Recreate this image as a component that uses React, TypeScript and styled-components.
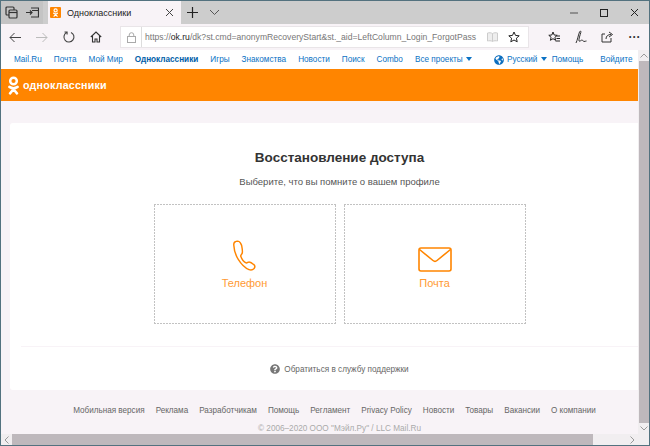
import React from 'react'
import styled, { createGlobalStyle } from 'styled-components'
import { FaGlobeAmericas, FaQuestionCircle } from 'react-icons/fa'

const GlobalStyle = createGlobalStyle`
  html, body {
    margin: 0;
    padding: 0;
    width: 650px;
    height: 446px;
    overflow: hidden;
    background: #f8f3f7;
    font-family: 'Liberation Sans', Arial, sans-serif;
  }
  * { box-sizing: border-box; }
`

const topLinks = ['Mail.Ru', 'Почта', 'Мой Мир', 'Одноклассники', 'Игры', 'Знакомства', 'Новости', 'Поиск', 'Combo']
const footerLinks = ['Мобильная версия', 'Реклама', 'Разработчикам', 'Помощь', 'Регламент', 'Privacy Policy', 'Новости', 'Товары', 'Вакансии', 'О компании']

function OkLogo({ size, color }: { size: number; color: string }) {
  return (
    <svg width={size * 0.58} height={size} viewBox='0 0 16 27' fill='none' stroke={color} strokeLinecap='round'>
      <circle cx='8' cy='7' r='4.8' strokeWidth='3.6' />
      <path d='M2 15.500c3.600 2.400 8.400 2.400 12 0M8 18v1M8 19 3 25M8 19 13 25' strokeWidth='3.6' />
    </svg>
  )
}

export default function App() {
  return (
    <>
      <GlobalStyle />
      <Win>
        <TabBar>
          <TabStripIcon>
            <svg width='13' height='13' viewBox='0 0 13 13' fill='none' stroke='#333' strokeWidth='1.2'>
              <rect x='1' y='1' width='8' height='8' rx='1' />
              <rect x='4' y='4' width='8' height='8' rx='1' fill='#c4c4c4' />
              <path d='M4 6.500h8' />
            </svg>
          </TabStripIcon>
          <TabStripIcon>
            <svg width='13' height='11' viewBox='0 0 13 11' fill='none' stroke='#333' strokeWidth='1.2'>
              <path d='M5 1h7.500v9H5M6 3.500h6.500' />
              <path d='M0 5.500h6M4 3.500l2 2-2 2' />
            </svg>
          </TabStripIcon>
          <Tab>
            <TabFavicon><OkLogo size={9} color='#fff' /></TabFavicon>
            <TabTitle>Одноклассники</TabTitle>
            <svg width='9' height='9' viewBox='0 0 9 9' stroke='#444' strokeWidth='1'>
              <path d='M1 1l7 7M8 1 1 8' />
            </svg>
          </Tab>
          <NewTab>
            <svg width='11' height='11' viewBox='0 0 11 11' stroke='#222' strokeWidth='1.200'>
              <path d='M5.500 0v11M0 5.500h11' />
            </svg>
          </NewTab>
          <NewTab>
            <svg width='11' height='7' viewBox='0 0 11 7' fill='none' stroke='#555' strokeWidth='1'>
              <path d='M1 1l4.500 4.500L10 1' />
            </svg>
          </NewTab>
          <WindowButtons>
            <WindowButton>
              <svg width='8' height='2' viewBox='0 0 8 2'><path d='M0 1h8' stroke='#666' strokeWidth='1.200' /></svg>
            </WindowButton>
            <WindowButton>
              <svg width='8' height='8' viewBox='0 0 8 8' fill='none'><rect x='.5' y='.5' width='7' height='7' stroke='#222' /></svg>
            </WindowButton>
            <WindowButton>
              <svg width='9' height='9' viewBox='0 0 9 9' stroke='#222'><path d='M1 1l7 7M8 1 1 8' /></svg>
            </WindowButton>
          </WindowButtons>
        </TabBar>

        <Toolbar>
          <NavIcon>
            <svg width='12' height='11' viewBox='0 0 12 11' fill='none' stroke='#444' strokeWidth='1'>
              <path d='M12 5.500H1M5.500 1 1 5.500 5.500 10' />
            </svg>
          </NavIcon>
          <NavIcon>
            <svg width='12' height='11' viewBox='0 0 12 11' fill='none' stroke='#bbb' strokeWidth='1'>
              <path d='M0 5.500h11M6.500 1 11 5.500 6.500 10' />
            </svg>
          </NavIcon>
          <NavIcon>
            <svg width='12' height='12' viewBox='0 0 12 12' fill='none' stroke='#444' strokeWidth='1.100'>
              <path d='M3.500 1.600A5 5 0 1 0 8 1.400M1.500 1h2.600v2.600' />
            </svg>
          </NavIcon>
          <NavIcon>
            <svg width='12' height='12' viewBox='0 0 12 12' fill='none' stroke='#333' strokeWidth='1.100'>
              <path d='M.8 6 6 1l5.200 5M2.500 5v6h2.500V8h2v3h2.500V5' />
            </svg>
          </NavIcon>
          <AddressBar>
            <LockBox>
              <svg width='9' height='11' viewBox='0 0 9 11' fill='none' stroke='#aaa' strokeWidth='1'>
                <rect x='.5' y='4.500' width='8' height='6' />
                <path d='M2.200 4.500V3a2.300 2.300 0 0 1 4.600 0v1.500' />
              </svg>
            </LockBox>
            <Url>
              https://<b>ok.ru</b>/dk?st.cmd=anonymRecoveryStart&amp;st._aid=LeftColumn_Login_ForgotPass
            </Url>
            <svg width='11' height='10' viewBox='0 0 11 10' fill='#eee' stroke='#ccc'>
              <path d='M5.500 1.500C4 .6 2 .6.5 1v8c1.500-.4 3.500-.4 5 .4 1.500-.8 3.500-.8 5-.4V1C9 .6 7 .6 5.500 1.500zM5.500 1.500v8' />
            </svg>
            <AddressStar>
              <svg width='12' height='12' viewBox='0 0 12 12' fill='none' stroke='#222' strokeWidth='1'>
                <path d='M6 1l1.500 3.400 3.700.4-2.800 2.400.8 3.600L6 9l-3.200 1.800.8-3.600L.8 4.800l3.700-.4z' />
              </svg>
            </AddressStar>
          </AddressBar>
          <ToolIcons>
            <ToolIcon>
              <svg width='12' height='12' viewBox='0 0 12 12' fill='none' stroke='#222' strokeWidth='1'>
                <path d='M5 1l1.200 3 3 .3-2.300 2 .7 3L5 7.700 2.400 9.300l.7-3-2.300-2 3-.3zM8.500 5H12M8.500 7.500H12M7.500 10H12' />
              </svg>
            </ToolIcon>
            <ToolIcon>
              <svg width='12' height='14' viewBox='0 0 12 14' fill='none' stroke='#333' strokeWidth='1'>
                <path d='M1 13c1.500-3 2-7 3.500-11 .6-1.500 1.800-1 1.300.5C5.200 5 3.500 9 4 11c1 .8 2-1 3-1s1 1.500 2 1.500 1.500-.5 2.500-.5' />
              </svg>
            </ToolIcon>
            <ToolIcon>
              <svg width='13' height='12' viewBox='0 0 13 12' fill='none' stroke='#333' strokeWidth='1'>
                <path d='M10 7v4H1V3h3M5 8c0-3 2-4.500 5-4.500M8 1l3.500 2.500L8 6' />
              </svg>
            </ToolIcon>
            <ToolIcon><Dots>···</Dots></ToolIcon>
          </ToolIcons>
        </Toolbar>

        <Viewport>
          <Page>
            <TopNav>
              {topLinks.map((l) => (
                <TopLink key={l} $strong={l === 'Одноклассники'}>{l}</TopLink>
              ))}
              <TopLink>Все проекты <Caret /></TopLink>
              <LangGroup>
                <FaGlobeAmericas size={10} color='#0d6fbf' />
                <TopLink>Русский <Caret /></TopLink>
              </LangGroup>
              <HelpLink>Помощь</HelpLink>
              <LoginLink>Войдите</LoginLink>
            </TopNav>
            <Brand>
              <OkLogo size={19} color='#fff' />
              <BrandName>одноклассники</BrandName>
            </Brand>
            <Content>
              <Card>
                <Title>Восстановление доступа</Title>
                <Subtitle>Выберите, что вы помните о вашем профиле</Subtitle>
                <Options>
                  <Option>
                    <svg width='23' height='32' viewBox='0 0 24 32' fill='none' stroke='#ff8500' strokeWidth='1.500'>
                      <path d='M3 .8C1.500 1.200.7 2.500.8 4.500c.3 5 1.800 10.500 4.700 15 2.800 4.500 6.500 8.800 11.200 10.700 2 .8 4 .3 5.300-1.200 1.200-1.500 1-3-.5-4.200-1.500-1.300-3-2.400-4.500-2.600-1.200-.2-2.200 1.500-3.400 1-2.200-1-4.500-4.200-5.500-7-.4-1.200 1.300-2 1.600-3.300.4-2-.1-5-.7-8C8 2.500 7.200.9 6 .7 5 .5 4 .5 3 .8z' />
                    </svg>
                    <OptionLabel>Телефон</OptionLabel>
                  </Option>
                  <Option>
                    <svg width='34' height='25' viewBox='0 0 34 25' fill='none' stroke='#ff8500' strokeWidth='1.600'>
                      <rect x='1' y='1' width='32' height='23' rx='2' />
                      <path d='M1.500 2.500 15 13.500c1.200 1 2.800 1 4 0L32.500 2.500' />
                    </svg>
                    <OptionLabel>Почта</OptionLabel>
                  </Option>
                </Options>
                <Divider />
                <Support>
                  <FaQuestionCircle size={10} color='#777' />
                  <span>Обратиться в службу поддержки</span>
                </Support>
              </Card>
              <FooterLinks>
                {footerLinks.map((l, i) => <span key={i}>{l}</span>)}
              </FooterLinks>
              <Copyright>© 2006–2020 ООО "Мэйл.Ру" / LLC Mail.Ru</Copyright>
            </Content>
          </Page>
          <VScroll>
            <svg width='8' height='5' viewBox='0 0 8 5' fill='none' stroke='#999'><path d='M.5 4.500 4 1l3.500 3.500' /></svg>
            <VThumb />
            <svg width='8' height='5' viewBox='0 0 8 5' fill='none' stroke='#999'><path d='M.5.5 4 4 7.500.5' /></svg>
          </VScroll>
        </Viewport>
        <HScroll>
          <svg width='5' height='8' viewBox='0 0 5 8' fill='none' stroke='#999'><path d='M4.500.5 1 4l3.500 3.500' /></svg>
          <HThumb />
          <svg width='5' height='8' viewBox='0 0 5 8' fill='none' stroke='#999'><path d='M.5.5 4 4 .5 7.500' /></svg>
        </HScroll>
      </Win>
    </>
  )
}

const Win = styled.div`
  width: 650px;
  height: 446px;
  display: flex;
  flex-direction: column;
  border: 1px solid #53727f;
  overflow: hidden;
  background: #f8f3f7;
`

const TabBar = styled.div`
  height: 23px;
  flex: none;
  display: flex;
  align-items: stretch;
  background: #cdcdcd;
`

const TabStripIcon = styled.div`
  width: 21px;
  display: flex;
  align-items: center;
  justify-content: center;
  background: #c4c4c4;
`

const Tab = styled.div`
  width: 133px;
  margin-left: 5px;
  padding: 0 7px 0 2px;
  display: flex;
  align-items: center;
  background: #f8f3f7;
`

const TabFavicon = styled.div`
  width: 11px;
  height: 11px;
  margin-right: 6px;
  border-radius: 1px;
  background: #ff8500;
  display: flex;
  align-items: center;
  justify-content: center;
`

const TabTitle = styled.span`
  flex: 1;
  font-size: 9px;
  color: #222;
`

const NewTab = styled.div`
  width: 22px;
  display: flex;
  align-items: center;
  justify-content: center;
`

const WindowButtons = styled.div`
  margin-left: auto;
  display: flex;
`

const WindowButton = styled.div`
  width: 30px;
  display: flex;
  align-items: center;
  justify-content: center;
`

const Toolbar = styled.div`
  height: 26px;
  flex: none;
  display: flex;
  align-items: center;
  background: #f8f3f7;
`

const NavIcon = styled.div`
  width: 27px;
  display: flex;
  justify-content: center;
`

const AddressBar = styled.div`
  width: 409px;
  height: 22px;
  margin-left: 11px;
  display: flex;
  align-items: center;
  background: #fff;
  border: 1px solid #e9e5e8;
  padding-right: 8px;
`

const LockBox = styled.div`
  width: 21px;
  height: 100%;
  display: flex;
  align-items: center;
  justify-content: center;
  border-right: 1px solid #ddd;
`

const Url = styled.div`
  flex: 1;
  min-width: 0;
  padding-left: 3px;
  overflow: hidden;
  white-space: nowrap;
  font-size: 8.600px;
  color: #777;
  b { font-weight: 400; color: #222; }
`

const AddressStar = styled.div`
  margin-left: 10px;
  display: flex;
`

const ToolIcons = styled.div`
  flex: 1;
  display: flex;
  align-items: center;
  margin-left: 11px;
`

const ToolIcon = styled.div`
  width: 27px;
  display: flex;
  justify-content: center;
`

const Dots = styled.span`
  font-size: 12px;
  line-height: 12px;
  font-weight: 700;
  color: #333;
`

const Viewport = styled.div`
  flex: 1;
  min-height: 0;
  display: flex;
`

const Page = styled.div`
  flex: 1;
  min-width: 0;
  display: flex;
  flex-direction: column;
  overflow: hidden;
`

const TopNav = styled.div`
  height: 19px;
  flex: none;
  display: flex;
  align-items: center;
  gap: 12px;
  padding-left: 13px;
  background: #fff;
  white-space: nowrap;
`

const TopLink = styled.span<{ $strong?: boolean }>`
  font-size: 8.200px;
  color: ${(p) => (p.$strong ? '#005ea8' : '#0b72c4')};
  font-weight: ${(p) => (p.$strong ? 700 : 400)};
`

const Caret = styled.i`
  display: inline-block;
  width: 0;
  height: 0;
  margin-left: 1px;
  vertical-align: 1px;
  border-left: 3px solid transparent;
  border-right: 3px solid transparent;
  border-top: 4px solid #0b72c4;
`

const LangGroup = styled.div`
  display: flex;
  align-items: center;
  gap: 3px;
  margin-left: 10px;
`

const HelpLink = styled(TopLink)`
  margin-left: -7px;
`

const LoginLink = styled(TopLink)`
  margin-left: 5px;
`

const Brand = styled.div`
  height: 32px;
  flex: none;
  display: flex;
  align-items: center;
  gap: 4px;
  padding-left: 7px;
  background: #ff8500;
`

const BrandName = styled.span`
  font-size: 10.700px;
  font-weight: 700;
  color: #fff;
  letter-spacing: .2px;
`

const Content = styled.div`
  flex: 1;
  padding: 22px 0 0 9px;
  display: flex;
  flex-direction: column;
  align-items: center;
`

const Card = styled.div`
  width: 100%;
  height: 267px;
  padding: 27px 0 0 31px;
  display: flex;
  flex-direction: column;
  align-items: center;
  background: #fff;
  border-radius: 3px 0 0 3px;
`

const Title = styled.h1`
  margin: 0;
  font-size: 13.500px;
  line-height: 16px;
  font-weight: 700;
  color: #333;
`

const Subtitle = styled.div`
  margin-top: 10px;
  font-size: 9.500px;
  line-height: 12px;
  color: #555;
`

const Options = styled.div`
  margin-top: 16px;
  display: flex;
  gap: 8px;
`

const Option = styled.div`
  width: 182px;
  height: 120px;
  display: flex;
  flex-direction: column;
  align-items: center;
  justify-content: flex-end;
  padding-bottom: 34px;
  background:
    repeating-linear-gradient(90deg, #c2c2c2 0 2px, transparent 2px 3px) top / 100% 1px no-repeat,
    repeating-linear-gradient(90deg, #c2c2c2 0 2px, transparent 2px 3px) bottom / 100% 1px no-repeat,
    repeating-linear-gradient(0deg, #c2c2c2 0 2px, transparent 2px 3px) left / 1px 100% no-repeat,
    repeating-linear-gradient(0deg, #c2c2c2 0 2px, transparent 2px 3px) right / 1px 100% no-repeat;
`

const OptionLabel = styled.div`
  margin-top: 4px;
  font-size: 11px;
  line-height: 14px;
  color: #ff9a33;
`

const Divider = styled.div`
  align-self: stretch;
  margin: 22px 0 0 -20px;
  height: 1px;
  background: #f8f3f7;
`

const Support = styled.div`
  margin-top: 17px;
  display: flex;
  align-items: center;
  gap: 4px;
  font-size: 8.200px;
  color: #666;
`

const FooterLinks = styled.div`
  margin: 15px 0 0 21px;
  display: flex;
  gap: 11px;
  font-size: 8.130px;
  line-height: 11px;
  color: #666;
`

const Copyright = styled.div`
  margin: 7px 0 0 31px;
  font-size: 8.200px;
  line-height: 11px;
  color: #aaa;
`

const VScroll = styled.div`
  width: 11px;
  flex: none;
  display: flex;
  flex-direction: column;
  align-items: center;
  background: #f1eef0;
  padding: 3px 0;
  gap: 3px;
`

const VThumb = styled.div`
  flex: 1;
  width: 10px;
  background: #beb8bc;
`

const HScroll = styled.div`
  height: 11px;
  flex: none;
  display: flex;
  align-items: center;
  padding: 0 14px 0 3px;
  gap: 3px;
  background: #f1eef0;
`

const HThumb = styled.div`
  width: 581px;
  height: 11px;
  margin-right: auto;
  background: #beb8bc;
`
